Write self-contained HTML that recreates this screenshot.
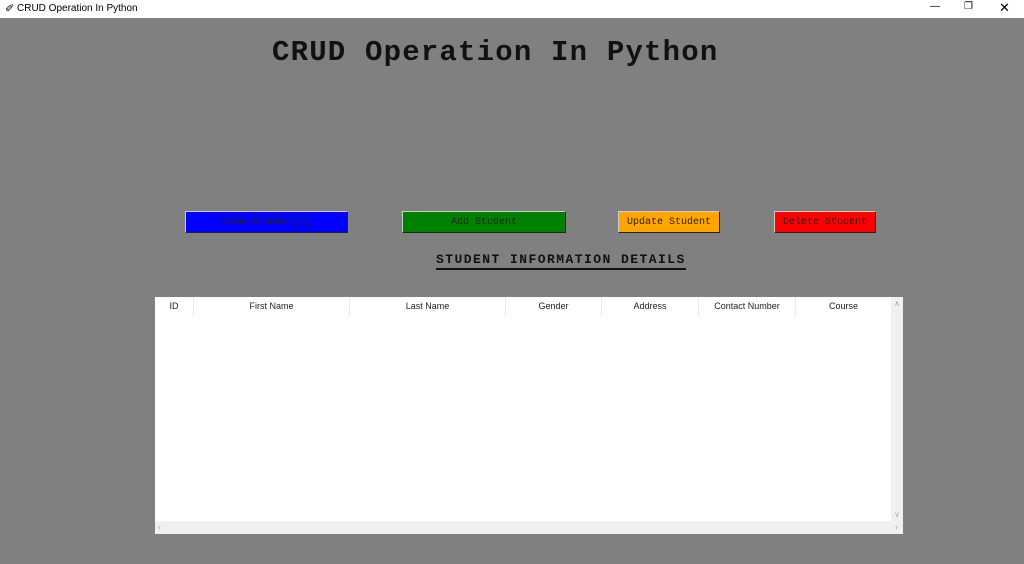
<!DOCTYPE html>
<html><head><style>
body{margin:0;width:1024px;height:564px;background:#808080;position:relative;overflow:hidden;font-family:"Liberation Sans",sans-serif}
.title{position:absolute;left:0;top:0;width:1024px;height:18px;background:#fff;font-size:10px}
.title span{position:absolute;top:3px}
.abs{position:absolute}
.h1{position:absolute;left:272px;top:36px;font-family:"Liberation Mono",monospace;font-weight:bold;font-size:29px;color:#111;letter-spacing:1.2px}
.btn{position:absolute;top:211px;height:20px;border:1px solid #222;border-top-color:#ccc;border-left-color:#ccc;font-family:"Liberation Mono",monospace;font-size:10px;color:#222;text-align:center;line-height:22px;box-sizing:content-box}
.sub{position:absolute;left:436px;top:252px;font-family:"Liberation Mono",monospace;font-weight:bold;font-size:13px;color:#111;border-bottom:2px solid #111;padding-bottom:1px;letter-spacing:1.45px}
.tbl{position:absolute;left:155px;top:297px;width:748px;height:237px;background:#fff}
.hd{position:absolute;top:0;height:19px;font-size:9px;color:#222;text-align:center;line-height:19px;border-right:1px solid #e8e8e8}
</style></head><body>
<div class="title">
<span style="left:5px;font-size:11px;top:2px">&#x2710;</span>
<span style="left:17px">CRUD Operation In Python</span>
<span style="left:930px;top:1px">&#x2014;</span>
<span style="left:964px;top:1px">&#x2750;</span>
<span style="left:999px;top:0px;font-size:13px">&#x2715;</span>
</div>
<div class="h1">CRUD Operation In Python</div>
<div class="btn" style="left:185px;width:161px;background:#0000ff">View Student(s)</div>
<div class="btn" style="left:402px;width:162px;background:#008000">Add Student</div>
<div class="btn" style="left:618px;width:100px;background:#ffa500">Update Student</div>
<div class="btn" style="left:774px;width:100px;background:#ff0000">Delete Student</div>
<div class="sub">STUDENT INFORMATION DETAILS</div>
<div class="tbl">
<div class="hd" style="left:0;width:38px">ID</div>
<div class="hd" style="left:39px;width:155px">First Name</div>
<div class="hd" style="left:195px;width:155px">Last Name</div>
<div class="hd" style="left:351px;width:95px">Gender</div>
<div class="hd" style="left:447px;width:96px">Address</div>
<div class="hd" style="left:544px;width:96px">Contact Number</div>
<div class="hd" style="left:641px;width:95px;border:none">Course</div>
<div class="abs" style="left:736px;top:0;width:12px;height:224px;background:#f0f0f0;font-size:8px;color:#aaa;text-align:center"><div style="margin-top:2px">&#x2227;</div><div style="position:absolute;bottom:2px;width:12px">&#x2228;</div></div>
<div class="abs" style="left:0;top:224px;width:748px;height:13px;background:#f0f0f0;font-size:9px;color:#aaa;line-height:13px"><span style="margin-left:3px">&lsaquo;</span><span style="position:absolute;right:5px">&rsaquo;</span></div>
</div>
</body></html>
